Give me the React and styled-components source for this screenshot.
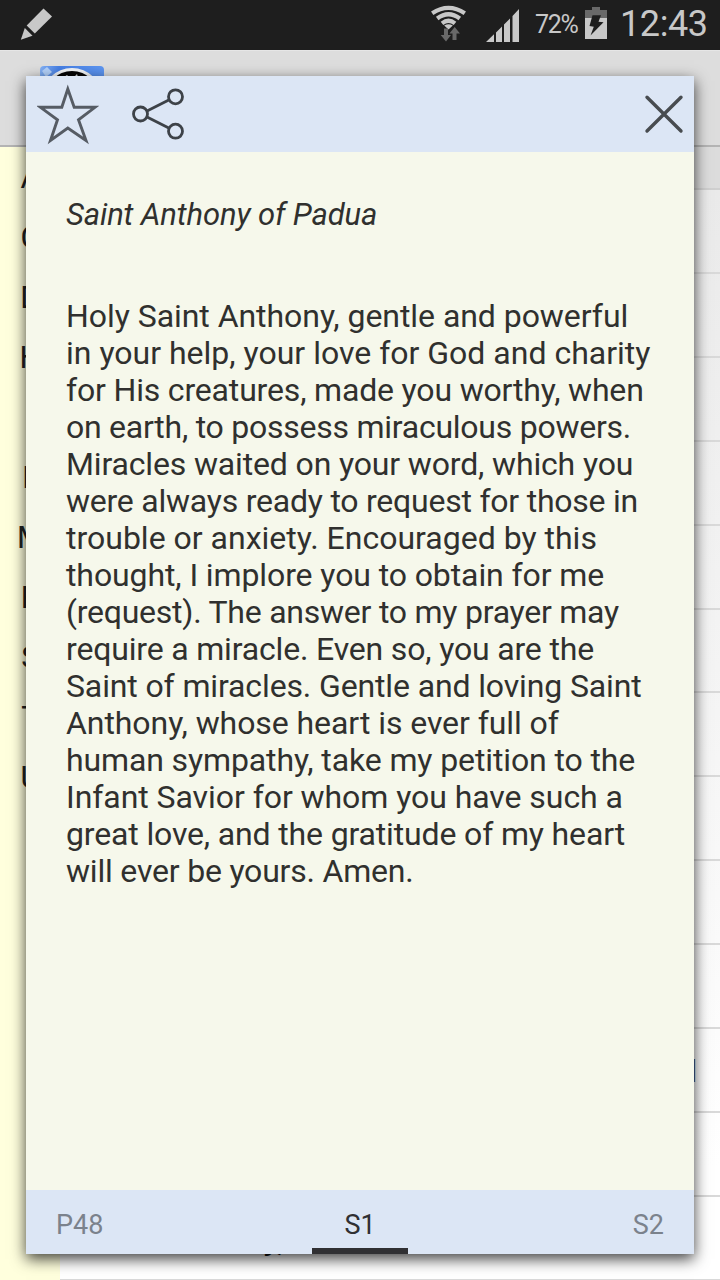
import styled, { createGlobalStyle } from "styled-components";

const INDEX_LETTERS = ["A", "C", "D", "H", "I", "L", "M", "P", "S", "T", "U"];

const ROWS = [
  {}, {}, {}, {}, {}, {}, {}, {}, {}, {},
  { text: "l", offset: 629.6 },
  {},
  { text: "y,", offset: 203, bold: true },
];

const PRAYER = [
  ["Holy Saint Anthony, gentle and powerful", -0.05],
  ["in your help, your love for God and charity", 0],
  ["for His creatures, made you worthy, when", -0.17],
  ["on earth, to possess miraculous powers.", -0.25],
  ["Miracles waited on your word, which you", -0.15],
  ["were always ready to request for those in", -0.23],
  ["trouble or anxiety. Encouraged by this", 0],
  ["thought, I implore you to obtain for me", -0.1],
  ["(request). The answer to my prayer may", -0.24],
  ["require a miracle. Even so, you are the", -0.17],
  ["Saint of miracles. Gentle and loving Saint", -0.13],
  ["Anthony, whose heart is ever full of", -0.07],
  ["human sympathy, take my petition to the", -0.12],
  ["Infant Savior for whom you have such a", -0.06],
  ["great love, and the gratitude of my heart", -0.15],
  ["will ever be yours. Amen.", -0.2],
];

const GlobalStyle = createGlobalStyle`
  * {
    box-sizing: border-box;
  }

  body {
    margin: 0;
    font-family: Roboto, "Liberation Sans", sans-serif;
    background: #fff;
  }

  svg {
    display: block;
    flex: none;
  }
`;

const Screen = styled.div`
  position: relative;
  display: flex;
  flex-direction: column;
  width: 720px;
  height: 1280px;
  overflow: hidden;
`;

const StatusBar = styled.div`
  display: flex;
  align-items: flex-start;
  flex: none;
  height: 50px;
  padding: 0 12px 0 20px;
  color: #c8c8c8;
  background: #1e1e1e;
`;

const StatusIcons = styled.div`
  display: flex;
  align-items: flex-start;
  margin-left: auto;
`;

const Signal = styled.div`
  margin-left: 20px;
`;

const Percent = styled.div`
  width: 44px;
  margin: 10px 6px 0 15px;
  font-size: 25px;
  line-height: 30px;
  letter-spacing: -1.3px;
  white-space: nowrap;
`;

const Clock = styled.div`
  width: 88px;
  margin-left: 13px;
  font-size: 36px;
  line-height: 48px;
  letter-spacing: -0.4px;
  white-space: nowrap;
`;

const ActionBar = styled.div`
  flex: none;
  height: 97px;
  padding: 15px 0 0 40px;
  background: #dddddd;
  border-top: 1px solid #e6e6e6;
  border-bottom: 2px solid #b4b4b4;
`;

const Main = styled.div`
  display: flex;
  flex: 1;
  min-height: 0;
`;

const IndexColumn = styled.div`
  width: 60px;
  padding-left: 1px;
  background: #ffffdd;
`;

const IndexLetter = styled.div`
  height: 60px;
  font-size: 31px;
  line-height: 62px;
  text-align: center;
  color: #222;
`;

const List = styled.div`
  flex: 1;
  background: linear-gradient(#e9e9e9, #f5f5f5 50%, #ffffff 90%);
`;

const SectionHeader = styled.div`
  height: 43px;
  background: #dcdcdc;
  border-bottom: 2px solid #cfcfcf;
`;

const ListRow = styled.div`
  height: 83.92px;
  padding-left: ${({ $offset }) => $offset || 0}px;
  border-bottom: 2px solid #d9d9d9;
  font-size: 32px;
  font-weight: ${({ $bold }) => ($bold ? 700 : 400)};
  line-height: 85px;
  color: ${({ $bold }) => ($bold ? "#111" : "#444")};
`;

const Dialog = styled.div`
  position: absolute;
  top: 76px;
  left: 26px;
  display: flex;
  flex-direction: column;
  width: 668px;
  height: 1178px;
  box-shadow: 0 5px 14px rgba(0, 0, 0, 0.75);
`;

const Toolbar = styled.div`
  display: flex;
  align-items: center;
  flex: none;
  height: 76px;
  padding: 0 10px 0 8px;
  background: #dce6f5;
`;

const ToolButton = styled.div`
  margin-left: ${({ $gap }) => $gap};
`;

const Content = styled.div`
  flex: 1;
  padding: 44px 0 0 40px;
  font-size: 32px;
  line-height: 37px;
  color: #30302e;
  background: #f6f8eb;
`;

const Title = styled.div`
  margin-bottom: 65px;
  font-size: 31px;
  font-style: italic;
  letter-spacing: -0.13px;
  white-space: nowrap;
`;

const Line = styled.div`
  letter-spacing: ${({ $spacing }) => $spacing}px;
  white-space: nowrap;
`;

const Pager = styled.div`
  display: flex;
  justify-content: space-between;
  flex: none;
  height: 64px;
  padding: 0 30px;
  background: #dce6f5;
`;

const Page = styled.div`
  flex: 1;
  font-size: 27px;
  line-height: 70px;
  text-align: ${({ $align }) => $align};
  color: #7b828c;
`;

const CurrentPage = styled.div`
  width: 96px;
  height: 64px;
  font-size: 27px;
  line-height: 70px;
  text-align: center;
  color: #303033;
  border-bottom: 6px solid #303033;
`;

const PencilIcon = () => (
  <svg width="34" height="50" viewBox="20 0 34 50" fill="#c8c8c8">
    <path d="M43.5 8.5L52 16.5L34.8 33.5L26.7 25.5Z" />
    <path d="M24.8 28L32.5 35.8L20.8 39.8Z" />
  </svg>
);

const WifiIcon = () => (
  <svg width="36" height="50" viewBox="430 0 36 50">
    <g fill="none" stroke="#c8c8c8" strokeWidth="4.2">
      <path d="M432.2 13.3Q448.5 2.4 464.8 13.3" />
      <path d="M437.2 18.5Q448.5 10 459.8 18.5" />
      <path d="M442 23.3Q448.5 18.2 455 23.3" />
    </g>
    <path d="M444.2 25.6Q448.5 23 452.8 25.6L448.5 29.5Z" fill="#c8c8c8" />
    <path d="M444 28.5h4v6.5h3l-5 6.5l-5.3-6.5h3.3zM452.5 40h4v-6.5h3.5l-5.3-6.5l-5.3 6.5h3.1z" fill="#696969" />
  </svg>
);

const SignalIcon = () => (
  <svg width="34" height="50" viewBox="486 0 34 50" fill="#c8c8c8">
    <path d="M486 42L494 34.3V42ZM496 32.5L502 26.5V42H496ZM504 24.5L510 18.5V42H504ZM512.5 16L519 9V42H512.5Z" />
  </svg>
);

const BatteryIcon = () => (
  <svg width="22" height="50" viewBox="585 0 22 50">
    <path d="M592 7h8v3h7v8h-22v-8h7z" fill="#696969" />
    <path d="M585 18h22v21h-22z" fill="#c8c8c8" />
    <path d="M592.5 15.3H601L598.5 21.7L603.5 22.3L590.5 35.5L593.8 26.7L589.5 26Z" fill="#1e1e1e" />
  </svg>
);

const AppIcon = () => (
  <svg width="64" height="64" viewBox="0 0 64 64">
    <defs>
      <clipPath id="app-icon">
        <rect width="64" height="64" rx="4" />
      </clipPath>
      <linearGradient id="app-sky" x2="1">
        <stop offset="0" stopColor="#83b1f5" />
        <stop offset="0.3" stopColor="#467fe4" />
        <stop offset="1" stopColor="#5d96f2" />
      </linearGradient>
    </defs>
    <g clipPath="url(#app-icon)">
      <rect width="64" height="64" fill="url(#app-sky)" />
      <path d="M2 5l5-4l5 5l-6 5z" fill="#b4d2fb" />
      <circle cx="32" cy="32" r="30" fill="#f4f6f8" />
      <circle cx="32" cy="32" r="27" fill="#050505" />
      <path d="M24 11l3-2l2 2zM34 11l3-3l1 3z" fill="#ddd" />
    </g>
  </svg>
);

const StarIcon = () => (
  <svg width="62" height="62" viewBox="37 83.5 62 62">
    <path
      d="M67.8 89.5L74.2 107.8L95 107.8L78.5 120.3L86 141L67.8 128.6L50.5 141L57.5 120.3L40.5 107.8L61.8 107.8Z"
      fill="none"
      stroke="#565c64"
      strokeWidth="2.9"
    />
  </svg>
);

const ShareIcon = () => (
  <svg width="54" height="54" viewBox="131 87 54 54" fill="none" stroke="#3d4248" strokeWidth="2.8">
    <circle cx="140.5" cy="114" r="7" />
    <circle cx="175.5" cy="96.8" r="7" />
    <circle cx="175.5" cy="131.2" r="7" />
    <path d="M147 111L169.3 99.8M147 117L169.3 128.2" />
  </svg>
);

const CloseIcon = () => (
  <svg width="40" height="40" viewBox="644 94 40 40">
    <path d="M647 97.3L681 131M681 97.3L647 131" stroke="#484c50" strokeWidth="3.4" strokeLinecap="round" />
  </svg>
);

const Background = () => (
  <>
    <ActionBar>
      <AppIcon />
    </ActionBar>
    <Main>
      <IndexColumn>
        {INDEX_LETTERS.map((letter) => (
          <IndexLetter key={letter}>{letter}</IndexLetter>
        ))}
      </IndexColumn>
      <List>
        <SectionHeader />
        {ROWS.map(({ text, offset, bold }, index) => (
          <ListRow key={index} $offset={offset} $bold={bold}>
            {text}
          </ListRow>
        ))}
      </List>
    </Main>
  </>
);

const PrayerDialog = () => (
  <Dialog>
    <Toolbar>
      <ToolButton $gap="3px">
        <StarIcon />
      </ToolButton>
      <ToolButton $gap="32px">
        <ShareIcon />
      </ToolButton>
      <ToolButton $gap="auto">
        <CloseIcon />
      </ToolButton>
    </Toolbar>
    <Content>
      <Title>Saint Anthony of Padua</Title>
      {PRAYER.map(([text, spacing]) => (
        <Line key={text} $spacing={spacing}>
          {text}
        </Line>
      ))}
    </Content>
    <Pager>
      <Page $align="left">P48</Page>
      <CurrentPage>S1</CurrentPage>
      <Page $align="right">S2</Page>
    </Pager>
  </Dialog>
);

const App = () => (
  <Screen>
    <GlobalStyle />
    <StatusBar>
      <PencilIcon />
      <StatusIcons>
        <WifiIcon />
        <Signal>
          <SignalIcon />
        </Signal>
        <Percent>72%</Percent>
        <BatteryIcon />
        <Clock>12:43</Clock>
      </StatusIcons>
    </StatusBar>
    <Background />
    <PrayerDialog />
  </Screen>
);

export default App;
